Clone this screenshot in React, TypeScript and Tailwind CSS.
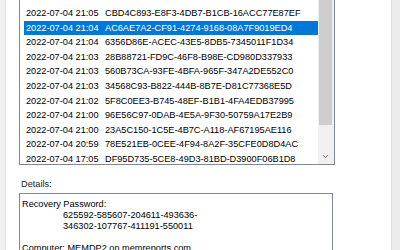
import { ChevronDown } from "lucide-react";

const rows: [string, string][] = [
  ["2022-07-04 21:05", "CBD4C893-E8F3-4DB7-B1CB-16ACC77E87EF"],
  ["2022-07-04 21:04", "AC6AE7A2-CF91-4274-9168-08A7F9019ED4"],
  ["2022-07-04 21:04", "6356D86E-ACEC-43E5-8DB5-7345011F1D34"],
  ["2022-07-04 21:03", "28B88721-FD9C-46F8-B98E-CD980D337933"],
  ["2022-07-04 21:03", "560B73CA-93FE-4BFA-965F-347A2DE552C0"],
  ["2022-07-04 21:03", "34568C93-B822-444B-8B7E-D81C77368E5D"],
  ["2022-07-04 21:02", "5F8C0EE3-B745-48EF-B1B1-4FA4EDB37995"],
  ["2022-07-04 21:00", "96E56C97-0DAB-4E5A-9F30-50759A17E2B9"],
  ["2022-07-04 21:00", "23A5C150-1C5E-4B7C-A118-AF67195AE116"],
  ["2022-07-04 20:59", "78E521EB-0CEE-4F94-8A2F-35CFE0D8D4AC"],
  ["2022-07-04 17:05", "DF95D735-5CE8-49D3-81BD-D3900F06B1D8"],
];

const selectedIndex = 1;

const App = () => {
  return (
    <div className="w-[400px] h-[250px] overflow-hidden bg-white flex font-['Liberation_Sans',Arial,sans-serif] text-[9.2px] text-black">
      {/* left window edge */}
      <div className="w-[6px] shrink-0 bg-[#f0f0f0] border-r border-[#e3e3e3]" />

      {/* main column */}
      <div className="w-[330px] shrink-0 pl-[13px] flex flex-col">
        {/* recovery key list */}
        <div className="w-[316px] h-[165px] shrink-0 flex border-l border-r border-b border-[#828790]">
          <div className="flex-1 overflow-hidden pt-[6px] pl-[4px]">
            {rows.map(([date, id], i) => (
              <div
                key={id}
                className={`h-[14.6px] leading-[14.6px] flex whitespace-nowrap pl-[2px] ${
                  i === selectedIndex ? "bg-[#0078d7] text-white" : ""
                }`}
              >
                <span className="w-[79px] shrink-0">{date}</span>
                <span>{id}</span>
              </div>
            ))}
          </div>
          <div className="w-[16px] shrink-0 bg-[#f0f0f0] flex flex-col pl-[1px] pr-[2px]">
            <div className="h-[125px] bg-[#cdcdcd]" />
            <div className="flex-1 flex items-end justify-center pb-[3px]">
              <ChevronDown size={9} strokeWidth={2.5} className="text-[#606060]" />
            </div>
          </div>
        </div>

        <div className="pl-[2px] mt-[14px] leading-[11px] text-[#1a1a1a]">Details:</div>

        {/* details text box */}
        <div className="w-[314px] mt-[3px] flex-1 border border-[#828790] border-b-0 pl-[2px] pt-[5px] leading-[11px] whitespace-nowrap">
          <div>Recovery Password:</div>
          <div className="pl-[41px]">625592-585607-204611-493636-</div>
          <div className="pl-[41px]">346302-107767-411191-550011</div>
          <div className="h-[11px]" />
          <div>Computer: MEMDP2.on.memreports.com</div>
        </div>
      </div>

      {/* right pane */}
      <div className="flex-1 bg-white" />
      <div className="w-[9px] shrink-0 bg-[#ebebeb] border-l border-[#dcdcdc]" />
    </div>
  );
};

export default App;
